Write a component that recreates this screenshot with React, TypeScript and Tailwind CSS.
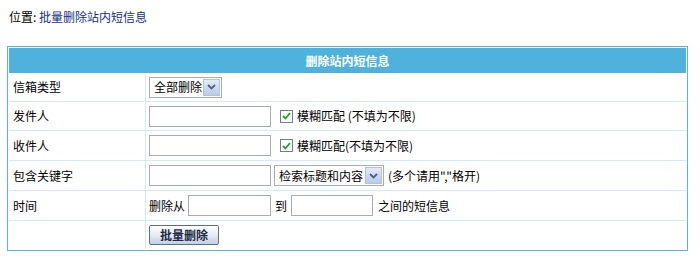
import React from 'react'

const font = { fontFamily: '"Noto Sans CJK SC", "Noto Sans", sans-serif' }

function FakeSelect({ label, width }: { label: string; width: string }) {
  return (
    <div className={`flex items-center h-[21px] border border-[#a5acb5] bg-white ${width}`}>
      <span className="flex-1 pl-[4px] text-[12px] leading-none text-black whitespace-nowrap">{label}</span>
      <span className="flex items-center justify-center w-[17px] h-[17px] mr-[1px] bg-gradient-to-b from-[#e2ebf7] to-[#b9cbe6] border border-[#b0c2dd]">
        <svg width="9" height="6" viewBox="0 0 9 6">
          <path d="M1 1 L4.5 4.5 L8 1" stroke="#4d6185" strokeWidth="1.8" fill="none" />
        </svg>
      </span>
    </div>
  )
}

function Check() {
  return (
    <span className="inline-flex items-center justify-center w-[13px] h-[13px] border border-[#6d7f93] bg-white">
      <svg width="9" height="8" viewBox="0 0 9 8">
        <path d="M1 4 L3.5 6.5 L8 1" stroke="#21a121" strokeWidth="1.8" fill="none" />
      </svg>
    </span>
  )
}

function TextBox({ width }: { width: string }) {
  return <div className={`h-[21px] border border-[#a5acb5] bg-white ${width}`} />
}

function Row({ label, children, last }: { label: string; children?: React.ReactNode; last?: boolean }) {
  return (
    <div className={`grid grid-cols-[137px_1fr] ${last ? '' : 'border-b border-[#d3eaf5]'}`}>
      <div className="flex items-center pl-[4px] border-r border-[#d3eaf5] text-[12px] text-black">{label}</div>
      <div className="flex items-center gap-[4px] pl-[3px]">{children}</div>
    </div>
  )
}

export default function App() {
  return (
    <div className="w-[700px] h-[268px] bg-white" style={font}>
      <div className="pt-[8px] pl-[9px] text-[12px] leading-[18px] text-black">
        位置: <span className="text-[#13318c]">批量删除站内短信息</span>
      </div>
      <div className="mt-[20px] ml-[7px] w-[681px] border border-[#5cb6dc] p-px">
        <div className="h-[25px] flex items-center justify-center bg-[#4fb2dc] text-white text-[12px] font-bold">
          删除站内短信息
        </div>
        <Row label="信箱类型">
          <div className="h-[28px] flex items-center">
            <FakeSelect label="全部删除" width="w-[73px]" />
          </div>
        </Row>
        <Row label="发件人">
          <div className="h-[28px] flex items-center gap-[9px]">
            <TextBox width="w-[122px]" />
            <div className="flex items-center gap-[4px] text-[12px]">
              <Check />
              <span>模糊匹配 (不填为不限)</span>
            </div>
          </div>
        </Row>
        <Row label="收件人">
          <div className="h-[29px] flex items-center gap-[9px]">
            <TextBox width="w-[122px]" />
            <div className="flex items-center gap-[4px] text-[12px]">
              <Check />
              <span>模糊匹配(不填为不限)</span>
            </div>
          </div>
        </Row>
        <Row label="包含关键字">
          <div className="h-[29px] flex items-center gap-[3px]">
            <TextBox width="w-[122px]" />
            <FakeSelect label="检索标题和内容" width="w-[110px]" />
            <span className="text-[12px] pl-[1px]">(多个请用","格开)</span>
          </div>
        </Row>
        <Row label="时间">
          <div className="h-[29px] flex items-center text-[12px]">
            <span>删除从</span>
            <TextBox width="w-[83px] ml-[3px]" />
            <span className="ml-[4px]">到</span>
            <TextBox width="w-[82px] ml-[4px]" />
            <span className="ml-[5px]">之间的短信息</span>
          </div>
        </Row>
        <Row label="" last>
          <div className="h-[28px] flex items-center">
            <button className="h-[20px] w-[70px] border border-[#5e6e86] rounded-[2px] bg-gradient-to-b from-[#ffffff] via-[#e6ebf3] to-[#c4cfe0] text-[12px] font-bold text-[#1c2a44] leading-none">
              批量删除
            </button>
          </div>
        </Row>
      </div>
    </div>
  )
}
